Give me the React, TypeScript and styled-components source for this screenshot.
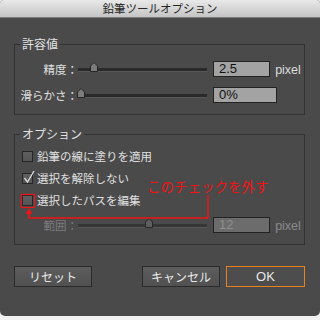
import styled, { createGlobalStyle } from "styled-components";

const GlobalStyle = createGlobalStyle`
  html, body {
    margin: 0;
    padding: 0;
    background: #f2f2f2;
  }
  body {
    font-family: "Noto Sans CJK JP", "Liberation Sans", sans-serif;
  }
`;

const Window = styled.div`
  position: relative;
  width: 320px;
  height: 316px;
  background: #4a4a4a;
  border-radius: 4px 4px 5px 5px;
  overflow: hidden;
  display: flex;
  flex-direction: column;
`;

const TitleBar = styled.div`
  height: 17px;
  border-bottom: 1px solid #7a7a7a;
  background: linear-gradient(#e9e9e9, #c4c4c4);
  display: flex;
  align-items: center;
  justify-content: center;
  font-size: 11.5px;
  line-height: 1;
  color: #262626;
`;

const Body = styled.div`
  padding: 18px 15px 0 14px;
  display: flex;
  flex-direction: column;
`;

const Group = styled.fieldset<{ $gapTop?: number }>`
  margin: ${(p) => p.$gapTop || 0}px 0 0 0;
  padding: 0;
  min-width: 0;
  border: 1px solid #323232;
`;

const Legend = styled.legend`
  margin-left: 5px;
  padding: 0 2px;
  font-size: 12px;
  line-height: 16px;
  color: #e2e2e2;
`;

const Content = styled.div<{ $top: number; $bottom: number; $gap?: number }>`
  display: flex;
  flex-direction: column;
  gap: ${(p) => p.$gap || 0}px;
  padding: ${(p) => p.$top}px 0 ${(p) => p.$bottom}px 0;
`;

const SliderRow = styled.div<{ $top?: number }>`
  display: grid;
  grid-template-columns: 63px 129px auto auto;
  align-items: center;
  height: 16px;
  margin-top: ${(p) => p.$top || 0}px;
`;

const Label = styled.span<{ $dim?: boolean }>`
  text-align: right;
  font-size: 11.5px;
  line-height: 16px;
  color: ${(p) => (p.$dim ? "#7c7c7c" : "#e0e0e0")};
  white-space: nowrap;
`;

const Track = styled.div<{ $dim?: boolean }>`
  position: relative;
  height: 3px;
  margin-top: 2px;
  background: ${(p) => (p.$dim ? "#363636" : "#2a2a2a")};
  border-bottom: 1px solid #575757;
`;

const Thumb = styled.svg`
  position: absolute;
  top: -6px;
  width: 8px;
  height: 10px;
  margin-left: -4px;
`;

const Field = styled.div<{ $w: number; $dim?: boolean }>`
  box-sizing: border-box;
  width: ${(p) => p.$w}px;
  height: 16px;
  margin-left: 6px;
  padding-left: 5px;
  border: 1px solid #232323;
  background: ${(p) => (p.$dim ? "#6c6c6c" : "#a3a3a3")};
  color: ${(p) => (p.$dim ? "#8e8e8e" : "#111")};
  font-family: "Liberation Sans", sans-serif;
  font-size: 13px;
  line-height: 14px;
`;

const Unit = styled.span<{ $dim?: boolean }>`
  margin-left: 2px;
  margin-top: 3px;
  font-family: "Liberation Sans", sans-serif;
  font-size: 12.5px;
  color: ${(p) => (p.$dim ? "#8a8a8a" : "#dedede")};
`;

const CheckRow = styled.div`
  display: flex;
  align-items: center;
  height: 22px;
  padding-left: 7px;
  gap: 4px;
`;

const Box = styled.span`
  position: relative;
  box-sizing: border-box;
  width: 11px;
  height: 11px;
  border: 1px solid #262626;
  background: linear-gradient(#5e5e5e, #555);
`;

const Tick = styled.svg`
  position: absolute;
  left: 0;
  top: -4px;
  width: 13px;
  height: 14px;
  overflow: visible;
`;

const CheckText = styled.span`
  font-size: 11.5px;
  line-height: 16px;
  color: #e0e0e0;
`;

const Buttons = styled.div`
  display: flex;
  justify-content: space-between;
  margin-top: 21px;
`;

const RightButtons = styled.div`
  display: flex;
  gap: 6px;
`;

const Button = styled.div<{ $w: number; $primary?: boolean }>`
  box-sizing: border-box;
  width: ${(p) => p.$w}px;
  height: 21px;
  display: flex;
  align-items: center;
  justify-content: center;
  border: 1px solid ${(p) => (p.$primary ? "#e8821e" : "#2a2a2a")};
  background: ${(p) =>
    p.$primary ? "#4d4d4d" : "linear-gradient(#5c5c5c, #515151)"};
  color: #e8e8e8;
  font-size: ${(p) => (p.$primary ? 13 : 12)}px;
  font-family: ${(p) =>
    p.$primary
      ? '"Liberation Sans", sans-serif'
      : '"Noto Sans CJK JP", sans-serif'};
`;

const Overlay = styled.svg`
  position: absolute;
  left: 0;
  top: 0;
  width: 320px;
  height: 316px;
  pointer-events: none;
`;

const Note = styled.div`
  position: absolute;
  left: 147px;
  top: 177px;
  font-size: 13.5px;
  line-height: 18px;
  color: #f01414;
  white-space: nowrap;
`;

function Slider({ pos, dim }: { pos: number; dim?: boolean }) {
  return (
    <Track $dim={dim}>
      <Thumb viewBox="0 0 8 10" style={{ left: pos }}>
        <path
          d="M0.5 9.5 V4 L4 0.5 L7.5 4 V9.5 Z"
          fill={dim ? "#5e5e5e" : "#7b7b7b"}
          stroke="#262626"
        />
      </Thumb>
    </Track>
  );
}

function Check({ label, checked }: { label: string; checked?: boolean }) {
  return (
    <CheckRow>
      <Box>
        {checked && (
          <Tick viewBox="0 0 13 14">
            <path d="M1.5 8 L4.5 12 L11 1" fill="none" stroke="#d8d8d8" strokeWidth="1.4" />
          </Tick>
        )}
      </Box>
      <CheckText>{label}</CheckText>
    </CheckRow>
  );
}

export default function App() {
  return (
    <>
      <GlobalStyle />
      <Window>
        <TitleBar>鉛筆ツールオプション</TitleBar>
        <Body>
          <Group>
            <Legend>許容値</Legend>
            <Content $top={8} $bottom={11} $gap={11}>
              <SliderRow>
                <Label>精度：</Label>
                <Slider pos={16} />
                <Field $w={57}>2.5</Field>
                <Unit>pixel</Unit>
              </SliderRow>
              <SliderRow>
                <Label>滑らかさ：</Label>
                <Slider pos={3} />
                <Field $w={64}>0%</Field>
              </SliderRow>
            </Content>
          </Group>

          <Group $gapTop={11}>
            <Legend>オプション</Legend>
            <Content $top={3} $bottom={12}>
              <Check label="鉛筆の線に塗りを適用" />
              <Check label="選択を解除しない" checked />
              <Check label="選択したパスを編集" />
              <SliderRow $top={5}>
                <Label $dim>範囲：</Label>
                <Slider pos={71} dim />
                <Field $w={57} $dim>
                  12
                </Field>
                <Unit $dim>pixel</Unit>
              </SliderRow>
            </Content>
          </Group>

          <Buttons>
            <Button $w={78}>リセット</Button>
            <RightButtons>
              <Button $w={78}>キャンセル</Button>
              <Button $w={79} $primary>
                OK
              </Button>
            </RightButtons>
          </Buttons>
        </Body>

        <Note>このチェックを外す</Note>
        <Overlay viewBox="0 0 320 316">
          <rect x="21.5" y="194.5" width="13" height="13" fill="none" stroke="#f01414" strokeWidth="1.2" />
          <polyline points="208,195 208,218 29,218 29,212" fill="none" stroke="#f01414" strokeWidth="1.5" />
          <polygon points="29,208.5 25.5,214 32.5,214" fill="#f01414" />
        </Overlay>
      </Window>
    </>
  );
}
